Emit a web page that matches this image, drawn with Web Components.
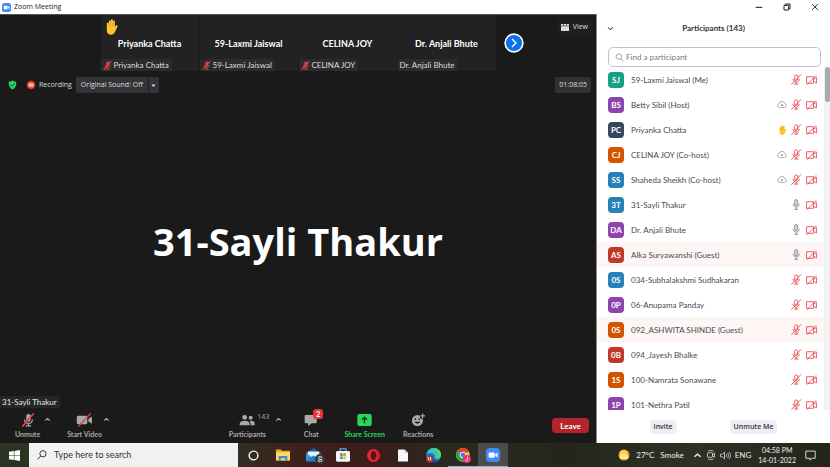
<!DOCTYPE html>
<html lang="en">
<head>
<meta charset="utf-8">
<title>Zoom Meeting</title>
<style>
  html, body { height: 100%; }
  body {
    margin: 0; display: flex; flex-direction: column; overflow: hidden;
    background: #fff; color: #333;
    font: 8px/12px Lato, "Open Sans", sans-serif;
    --small: 7px/12px "Open Sans", "Noto Sans", sans-serif;
  }
  main { flex: 1; min-height: 0; display: grid; grid-template-columns: 596fr 234fr; grid-template-rows: minmax(0, 1fr); }
</style>
</head>
<body>
<title-bar>Zoom Meeting</title-bar>
<main>
  <meeting-stage></meeting-stage>
  <participants-panel></participants-panel>
</main>
<task-bar></task-bar>

<script>
const ICONS = {
  zoom: ['0 0 16 16', '<rect width="16" height="16" rx="4.5" fill="#3f8cf4"/><rect x="3" y="5" width="7" height="6" rx="1.4" fill="#fff"/><path d="M10.6 7.2 13.2 5.2v5.6l-2.6-2z" fill="#fff"/>'],
  hand: ['1 0 14 18', '<path d="M2.700 11V5.200a1.100 1.100 0 0 1 2.200 0V2.500a1.200 1.200 0 0 1 2.300 0V1.500a1.200 1.200 0 0 1 2.400 0v1.300a1.100 1.100 0 0 1 2.200 0v6.300l.9-1.400c1-1.200 2.700-.3 2 1l-2.700 5.700c-1 2.300-2.300 3.300-4.700 3.300-3.200 0-4.600-2.200-4.600-4.700z" fill="#fcc42f"/><path d="M4.900 5v4M7.200 3v5.500M9.600 3v5.500" stroke="#dd9414" stroke-width=".7" fill="none"/>'],
  micoff: ['0 0 16 16', '<rect x="6" y="1" width="5" height="9" rx="2.500" fill="currentColor"/><path d="M4 7.500c0 6 9 6 9 0M8.500 12v2.700M5.500 14.700h6" stroke="currentColor" stroke-width="1.400" fill="none"/><path d="M14.500.5 1.500 15.500" stroke="#e0434b" stroke-width="2"/>'],
  micoffline: ['1 0 18 18', '<g fill="none" stroke="#e8424c" stroke-width="1.400"><rect x="7" y="1.500" width="5" height="9" rx="2.500"/><path d="M4.500 8c0 7 10 7 10 0M9.500 13.500v3M6 16.500h7M17.500.5 1.500 17.500"/></g>'],
  mic: ['1 0 18 18', '<g fill="none" stroke="#85858d" stroke-width="1.400"><rect x="7" y="1" width="5" height="10" rx="2.500" fill="#d5d5da"/><path d="M4.500 8c0 7 10 7 10 0M9.500 13.500v3.500M6.500 17h6"/></g>'],
  camoffline: ['0 0 20 18', '<g fill="none" stroke="#e8424c" stroke-width="1.500"><path d="M13.500 3H1v12h12.500zM13.500 8 19 4v10.500L13.500 11M18.500.5 2 17.500"/></g>'],
  camoff: ['0 0 24 20', '<rect x="1" y="4" width="15" height="12" rx="2" fill="#a9a9a9"/><path d="m17.500 8.500 5-3.500v10.500l-5-3.500z" fill="#a9a9a9"/><path d="M21 .5 3 19.500" stroke="#d8434b" stroke-width="2"/>'],
  cloud: ['0 1 20 14', '<path d="M5 14.200a4.200 4.200 0 0 1-.5-8.200 5.500 5.500 0 0 1 10.800 0A4.200 4.200 0 0 1 15 14.200z" fill="none" stroke="#8b8b96" stroke-width="1.400"/><circle cx="10" cy="9.200" r="1.800" fill="#e3444e"/>'],
  down: ['0 0 10 10', '<path d="m1.500 3.500 3.500 3 3.500-3" fill="none" stroke="currentColor" stroke-width="1.500"/>'],
  up: ['0 0 10 10', '<path d="m1.500 6.500 3.500-3 3.500 3" fill="none" stroke="currentColor" stroke-width="1.500"/>'],
  tri: ['0 0 10 10', '<path d="M2 3.500h6L5 7z" fill="currentColor"/>'],
  next: ['0 0 20 20', '<circle cx="10" cy="10" r="8.900" fill="#0e71eb" stroke="#fff" stroke-width="1.600"/><path d="m8 6 4 4-4 4" fill="none" stroke="#fff" stroke-width="1.400"/>'],
  grid: ['0 0 16 14', '<path d="M0 0h4.500v3.500H0zM5.700 0h4.600v3.500H5.700zM11.500 0H16v3.500h-4.500zM0 4.700h16V14H0z" fill="#ddd"/>'],
  shield: ['0 0 18 20', '<path d="M9 1c2.500 1.800 5 2.300 7.500 2.300C17 11 15 16 9 19 3 16 1 11 1.500 3.300 4 3.300 6.500 2.800 9 1z" fill="#25d35f"/><path d="m5 9.500 3 3 5.200-5.500" fill="none" stroke="#143" stroke-width="2"/>'],
  record: ['0 0 20 20', '<circle cx="10" cy="10" r="9.500" fill="#6e2317"/><circle cx="10" cy="10" r="7.500" fill="#ef4a3a"/><rect x="5.500" y="7" width="9" height="6" rx="1" fill="#ffd9d2"/><path d="M7 10h6" stroke="#e8685b" stroke-width="1.200"/>'],
  people: ['0 0 24 18', '<g fill="#a9a9a9"><circle cx="8.500" cy="5" r="3.600"/><path d="M1 17v-2.500c0-6 15-6 15 0V17z"/><circle cx="17.500" cy="5.500" r="3"/><path d="M17.500 17v-3c0-1.300-.6-2.600-1.600-3.500 4-.8 7.600.8 7.600 4V17z"/></g>'],
  chat: ['0 0 22 22', '<path d="M3 3h15a2 2 0 0 1 2 2v9a2 2 0 0 1-2 2h-6l-5.500 5V16H3a2 2 0 0 1-2-2V5a2 2 0 0 1 2-2z" fill="#a9a9a9"/>'],
  share: ['0 0 24 20', '<rect width="24" height="20" rx="3.500" fill="#23d959"/><path d="M12 15.500V6M8 9.500l4-4 4 4" fill="none" stroke="#17341f" stroke-width="2.200"/>'],
  smile: ['0 0 24 24', '<circle cx="11" cy="13" r="9.500" fill="#a9a9a9"/><circle cx="7.500" cy="10.500" r="1.400" fill="#1a1a1a"/><circle cx="14" cy="10.500" r="1.400" fill="#1a1a1a"/><path d="M6 15c1.700 4 8.300 4 10 0z" fill="#1a1a1a"/><circle cx="20" cy="5" r="5" fill="#1a1a1a"/><path d="M20 1v8M16 5h8" stroke="#a9a9a9" stroke-width="2"/>'],
  search: ['0 0 16 16', '<circle cx="7" cy="6.500" r="5" fill="none" stroke="currentColor" stroke-width="1.200"/><path d="m10.500 10.500 4.500 4.500" stroke="currentColor" stroke-width="1.200"/>'],
  wsearch: ['0 0 16 16', '<circle cx="9.500" cy="6" r="5" fill="none" stroke="#222" stroke-width="1.400"/><path d="M6 9.500 1 15" stroke="#222" stroke-width="1.400"/>'],
  min: ['0 0 12 12', '<path d="M1 6.500h10" stroke="#222" stroke-width="1.600"/>'],
  restore: ['0 0 12 12', '<path d="M1.500 3.500h7v7h-7zM3.500 3.500v-2h7v7h-2" fill="none" stroke="#222" stroke-width="1.500"/>'],
  close: ['0 0 12 12', '<path d="m1.500 1.500 9 9m0-9-9 9" stroke="#222" stroke-width="1.300"/>'],
  win: ['0 0 20 20', '<path d="M0 3 8.800 1.700v7.800H0zM9.800 1.600 20 0v9.500H9.800zM0 10.500h8.800v7.800L0 17zM9.800 10.500H20V20L9.800 18.400z" fill="#fff"/>'],
  cortana: ['0 0 20 20', '<circle cx="10" cy="10" r="8" fill="none" stroke="#f4f1ee" stroke-width="2.600"/>'],
  folder: ['0 0 26 22', '<path d="M0 1h9l2 2h15v18H0z" fill="#e8ab2d"/><path d="M0 6h26v15H0z" fill="#ffd867"/><path d="M5 21v-8h16v8h-4v-4H9v4z" fill="#3d8fd8"/>'],
  mail: ['0 0 26 24', '<path d="M0 9 13 0l13 9v14H0z" fill="#1266b0"/><path d="M3 6h20v12H3z" fill="#e9f3fb"/><path d="M0 9l13 8 13-8v14H0z" fill="#2d9be8"/><path d="M0 23l13-10 13 10z" fill="#1d7fd0"/>'],
  store: ['0 0 24 24', '<path d="M7 7V1.500h10V7" fill="none" stroke="#41b5ec" stroke-width="2.200"/><rect y="5" width="24" height="18.500" rx="2.500" fill="#f4f6f8"/><path d="M7 9h4.500v4.500H7z" fill="#ef5030"/><path d="M12.500 9H17v4.500h-4.500z" fill="#7cb82d"/><path d="M7 14.500h4.500V19H7z" fill="#1e9ee5"/><path d="M12.500 14.500H17V19h-4.500z" fill="#f8b716"/>'],
  opera: ['0 0 24 24', '<path fill-rule="evenodd" d="M12 0a12 12 0 1 0 0 24 12 12 0 0 0 0-24zm0 3.500c3 0 5 3.600 5 8.500s-2 8.500-5 8.500-5-3.600-5-8.500 2-8.500 5-8.500z" fill="#f0202c"/><path d="M17 3.500c2.500 4 2.500 13 0 17a11 11 0 0 0 0-17z" fill="#b10f1c"/>'],
  file: ['0 0 18 22', '<path d="M0 0h12l6 6v16H0z" fill="#f7f7f7"/><path d="M12 0v6h6z" fill="#bbb"/>'],
  edge: ['0 0 24 24', '<circle cx="12" cy="12" r="12" fill="#1679d0"/><path d="M1 9C3 3 7 0 12 0c7 0 12 5 12 11 0 4-3 6-7 6-3 0-4-1-3-3 1-5-6-8-13-5z" fill="#38c6b4"/><path d="M12 0c7 0 12 5 12 11 0 4-3 6-7 6 5-4 3-13-5-17z" fill="#5bd66a"/><path d="M8 13c0 6 5 9 13 6-5 7-15 6-18-1 0-4 2-6 5-5z" fill="#123f89"/><circle cx="6" cy="17.500" r="6" fill="#a92732"/><path d="m3 14 2 6m2-6 1 6" stroke="#fff" stroke-width="1.600"/>'],
  chrome: ['0 0 24 24', '<circle cx="11" cy="11" r="11" fill="#fbc91d"/><path d="M11 11 1.500 5.500a11 11 0 0 1 19 0z" fill="#e43d31"/><path d="M11 11 1.500 5.500A11 11 0 0 0 11 22l4-7z" fill="#2ba24c"/><circle cx="11" cy="11" r="5" fill="#fff"/><circle cx="11" cy="11" r="3.900" fill="#3c7de6"/><circle cx="17.500" cy="17.500" r="6.500" fill="#ec3577"/><path d="M18.500 14v4.500c0 2.500-3 2.500-3 .5" stroke="#fff" stroke-width="1.200" fill="none"/>'],
  weather: ['0 0 24 24', '<circle cx="12" cy="12" r="11" fill="#f6a81c"/><circle cx="11" cy="9" r="7" fill="#ffd04a"/><path d="M7 20a4 4 0 0 1 0-8c2-3 6-3 8 0 4-1 7 2 6 5-.5 2-2 3-4 3z" fill="#ffe6a6"/>'],
  meetnow: ['0 0 20 20', '<g fill="none" stroke="#eee" stroke-width="1.500"><rect x="3" y="5.500" width="10" height="9" rx="1.500"/><path d="m13 9 4-2.500v7.500L13 11.500M4 2.500c3-2 8-2 11 0M4 17.500c3 2 8 2 11 0"/></g>'],
  sound: ['0 0 22 18', '<g fill="none" stroke="#eee" stroke-width="1.400"><path d="M1 6.500h3.500L9 2.500v13l-4.500-4H1zM12 6c1.500 2 1.500 4 0 6M15 4c2.800 3 2.800 7 0 10M18 2c4 4 4 10 0 14"/></g>'],
  note: ['0 0 20 20', '<path d="M1.500 2h17v13H12l-3 3.500V15H1.500z" fill="none" stroke="#eee" stroke-width="1.600"/>']
};
const icon = (name, w, h = w) => `<svg-icon name="${name}" style="--w:${w}px;--h:${h}px"></svg-icon>`;

const BASE = `
  *, *::before { box-sizing: border-box; }
  button { font: inherit; color: inherit; background: none; border: 0; padding: 0; margin: 0; }
`;
class Base extends HTMLElement {
  connectedCallback() {
    if (this.shadowRoot) return;
    this.attachShadow({ mode: 'open' }).innerHTML = `<style>${BASE}${this.css()}</style>${this.html()}`;
  }
  css() { return ''; }
  html() { return '<slot></slot>'; }
  attr(n) { return this.getAttribute(n) || ''; }
}

customElements.define('svg-icon', class extends Base {
  css() { return ':host{display:block;flex:none;width:var(--w);height:var(--h)} svg{display:block;width:100%;height:100%}'; }
  html() { const [box, body] = ICONS[this.attr('name')]; return `<svg viewBox="${box}" aria-hidden="true">${body}</svg>`; }
});

customElements.define('title-bar', class extends Base {
  css() { return `
    :host { display: flex; align-items: center; gap: 3px; height: 14px; padding: 0 10px 0 2px; background: #fff; color: #222; font: var(--small); }
    .name { flex: 1; }
    .controls { display: flex; gap: 18px; }
    button { width: 10px; display: grid; place-items: center; }`; }
  html() { return `${icon('zoom', 9)}<span class="name"><slot></slot></span>
    <div class="controls">
      <button type="button" aria-label="Minimize">${icon('min', 8)}</button>
      <button type="button" aria-label="Restore">${icon('restore', 8)}</button>
      <button type="button" aria-label="Close">${icon('close', 8)}</button>
    </div>`; }
});

customElements.define('video-tile', class extends Base {
  css() { return `
    :host { display: grid; grid-template-rows: 20px 18px 1fr; width: 99px; height: 56px; background: #222; border-right: 1px solid #1c1c1c; color: #fff; }
    .hand { padding: 4px 0 0 4px; }
    .name { text-align: center; font-weight: 700; line-height: 18px; font-size: 9px; white-space: nowrap; }
    .tag { align-self: end; justify-self: start; display: flex; align-items: center; gap: 2px; height: 12px; padding: 0 3px 0 2px; background: #2b2b2b; color: #ddd; }`; }
  html() { return `<div class="hand">${this.hasAttribute('raised') ? icon('hand', 13, 16) : ''}</div>
    <div class="name">${this.attr('name')}</div>
    <div class="tag">${this.hasAttribute('muted') ? `<span style="color:#e0434b">${icon('micoff', 9)}</span>` : ''}${this.attr('name')}</div>`; }
});

customElements.define('tool-button', class extends Base {
  css() { return `
    :host { display: block; color: #a9a9a9; }
    :host([accent]) { color: #23d959; }
    button { display: grid; justify-items: center; grid-template-rows: 16px 12px; align-items: center; white-space: nowrap; font-weight: 700; font-size: 7px; }
    .art { position: relative; display: flex; }
    .count { position: absolute; left: 100%; top: -3px; padding-left: 2px; font: var(--small); }
    .badge { position: absolute; left: 9px; top: -4px; min-width: 10px; height: 10px; border-radius: 3px; background: #e8343a; color: #fff; line-height: 10px; text-align: center; }`; }
  html() { const [w, h] = this.attr('size').split(' ');
    return `<button type="button"><span class="art">${icon(this.attr('icon'), w, h)}
      ${this.hasAttribute('count') ? `<span class="count">${this.attr('count')}</span>` : ''}
      ${this.hasAttribute('badge') ? `<span class="badge">${this.attr('badge')}</span>` : ''}</span><slot></slot></button>`; }
});

customElements.define('meeting-stage', class extends Base {
  css() { return `
    :host { display: flex; flex-direction: column; background: #1a1a1a; color: #ddd; border-top: 1px solid #555; min-width: 0; }
    .strip { display: grid; grid-template-columns: 1fr auto 1fr; }
    .tiles { grid-column: 2; display: flex; border-left: 1px solid #1c1c1c; }
    .side { display: flex; justify-content: space-between; align-items: center; padding: 0 4px 0 7px; }
    .view { align-self: flex-start; display: flex; align-items: center; gap: 4px; height: 16px; margin-top: 4px; padding: 0 4px; background: #1f1f1f; border-radius: 3px; font: var(--small); }
    .status { display: flex; align-items: center; height: 16px; margin-top: 6px; padding: 0 5px 0 8px; font: var(--small); }
    .rec { display: flex; align-items: center; gap: 3px; margin: 0 4px 0 9px; }
    .sound { display: flex; height: 16px; background: #333437; border-radius: 2px; }
    .sound button + button { width: 11px; border-left: 1px solid #1f1f1f; display: grid; place-items: center; }
    .sound button:first-child { padding: 0 5px; }
    .timer { margin-left: auto; background: #303134; padding: 0 4px; line-height: 16px; border-radius: 2px; }
    .speaker { flex: 1; display: grid; place-items: center; color: #fff; font: 700 38px/48px "Open Sans", "Noto Sans", sans-serif; padding-bottom: 8px; }
    .tag { align-self: flex-start; background: #262626; color: #e6e6e6; line-height: 12px; padding: 0 3px 0 2px; }
    .tools { display: flex; justify-content: space-between; align-items: center; height: 35px; padding: 0 7px 0 15px; }
    .group { display: flex; align-items: flex-start; }
    .caret { width: 8px; height: 16px; display: grid; place-items: center; color: #a9a9a9; }
    .leave { width: 37px; height: 15px; border-radius: 4px; background: #b5242a; color: #fff; font-weight: 700; }`; }
  html() { return `
    <div class="strip">
      <div class="tiles">
        <video-tile name="Priyanka Chatta" muted raised></video-tile>
        <video-tile name="59-Laxmi Jaiswal" muted></video-tile>
        <video-tile name="CELINA JOY" muted></video-tile>
        <video-tile name="Dr. Anjali Bhute"></video-tile>
      </div>
      <div class="side">
        <button type="button" aria-label="Next">${icon('next', 20)}</button>
        <button type="button" class="view">${icon('grid', 8, 7)}View</button>
      </div>
    </div>
    <div class="status">
      ${icon('shield', 9, 10)}
      <span class="rec">${icon('record', 10)}Recording</span>
      <div class="sound"><button type="button">Original Sound: Off</button><button type="button" aria-label="Sound options">${icon('tri', 7)}</button></div>
      <span class="timer">01:08:05</span>
    </div>
    <div class="speaker">31-Sayli Thakur</div>
    <div class="tag">31-Sayli Thakur</div>
    <div class="tools">
      <div class="group">
        <tool-button icon="micoff" size="14 14" style="margin-right:3px">Unmute</tool-button><button type="button" class="caret" aria-label="Audio options">${icon('up', 7)}</button>
        <tool-button icon="camoff" size="17 14" style="margin-left:16px">Start Video</tool-button><button type="button" class="caret" aria-label="Video options">${icon('up', 7)}</button>
      </div>
      <div class="group">
        <tool-button icon="people" size="16 12" count="143" style="margin-right:9px">Participants</tool-button><button type="button" class="caret" aria-label="Participant options">${icon('up', 7)}</button>
        <tool-button icon="chat" size="14 14" badge="2" style="margin:0 26px 0 21px">Chat</tool-button>
        <tool-button icon="share" size="15 12" accent style="margin-right:18px">Share Screen</tool-button>
        <tool-button icon="smile" size="14 14">Reactions</tool-button>
      </div>
      <button type="button" class="leave">Leave</button>
    </div>`; }
});

customElements.define('participant-row', class extends Base {
  css() { return `
    :host { display: flex; align-items: center; height: 25px; flex: none; padding: 0 7px 0 11px; gap: 7px; color: #4a4a55; }
    :host([guest]) { background: #fdf6f4; }
    .avatar { width: 16px; height: 16px; border-radius: 4px; color: #fff; font-weight: 700; line-height: 16px; text-align: center; background: var(--c); }
    .name { flex: 1; white-space: nowrap; }
    .state { display: flex; align-items: center; gap: 4px; }`; }
  html() {
    const s = this.attr('state');
    return `<span class="avatar">${this.attr('initials')}</span><span class="name"><slot></slot></span>
    <span class="state">${s.includes('c') ? icon('cloud', 10, 7) : ''}${s.includes('h') ? icon('hand', 9, 10) : ''}
    ${icon(s.includes('u') ? 'mic' : 'micoffline', 11, 11)}${icon('camoffline', 11, 10)}</span>`; }
});

const PEOPLE = [
  ['SJ', '#16a085', '59-Laxmi Jaiswal (Me)', 'm'], ['BS', '#8e44ad', 'Betty Sibil (Host)', 'cm'],
  ['PC', '#34495e', 'Priyanka Chatta', 'hm'], ['CJ', '#d35400', 'CELINA JOY (Co-host)', 'cm'],
  ['SS', '#2980b9', 'Shaheda Sheikh (Co-host)', 'cm'], ['3T', '#2980b9', '31-Sayli Thakur', 'u'],
  ['DA', '#8e44ad', 'Dr. Anjali Bhute', 'u'], ['AS', '#c0392b', 'Alka Suryawanshi (Guest)', 'u'],
  ['0S', '#2980b9', '034-Subhalakshmi Sudhakaran', 'm'], ['0P', '#8e44ad', '06-Anupama Panday', 'm'],
  ['0S', '#d35400', '092_ASHWITA SHINDE (Guest)', 'm'], ['0B', '#c0392b', '094_Jayesh Bhalke', 'm'],
  ['1S', '#d35400', '100-Namrata Sonawane', 'm'], ['1P', '#8e44ad', '101-Nethra Patil', 'm']
];
customElements.define('participants-panel', class extends Base {
  css() { return `
    :host { display: flex; flex-direction: column; min-width: 0; background: #fff; border-left: 1px solid #8c8c8c; }
    header { display: grid; grid-template-columns: 20px 1fr 20px; align-items: center; height: 28px; padding: 0 10px; }
    h2 { margin: 0; font-size: 8px; font-weight: 700; text-align: center; color: #333; }
    header button { color: #555; }
    .find { display: flex; align-items: center; gap: 2px; height: 20px; margin: 5px 9px 0 11px; padding: 0 6px; border: 1px solid #c3c0d8; border-radius: 5px; color: #77778a; }
    input { flex: 1; min-width: 0; border: 0; padding: 0; outline: 0; background: none; font: inherit; color: inherit; }
    input::placeholder { color: #77778a; opacity: 1; }
    .body { flex: 1; min-height: 0; display: flex; }
    .list { flex: 1; min-width: 0; overflow: hidden; display: flex; flex-direction: column; }
    .bar { width: 6px; background: #f1f1f6; }
    .bar i { display: block; height: 35px; width: 5px; margin-left: 1px; border-radius: 3px; background: #a9a9b2; }
    footer { display: flex; justify-content: space-around; align-items: center; height: 33px; padding: 0 26px; }
    footer button { height: 14px; padding: 0 4px; border-radius: 4px; background: #f0eff6; color: #333344; font: var(--small); font-weight: 600; }`; }
  html() { return `
    <header><button type="button" aria-label="Collapse">${icon('down', 7)}</button><h2>Participants (143)</h2></header>
    <label class="find">${icon('search', 9)}<input type="text" aria-label="Find a participant" placeholder="Find a participant"></label>
    <div class="body"><div class="list" role="list">${PEOPLE.map(([i, c, n, s]) =>
      `<participant-row role="listitem" initials="${i}" style="--c:${c}" state="${s}" ${n.includes('Guest') ? 'guest' : ''}>${n}</participant-row>`).join('')}</div>
      <div class="bar"><i></i></div></div>
    <footer><button type="button">Invite</button><button type="button">Unmute Me</button></footer>`; }
});

customElements.define('task-bar', class extends Base {
  css() { return `
    :host { display: flex; height: 24px; color: #eee; background: linear-gradient(90deg, #2d3324 0, #2d3324 28%, #37291f 31%, #3f1f1b 38%, #3a1d1a 46%, #2b2a20 54%, #24261c 68%, #2f3126 84%, #23251b 100%); }
    button { display: grid; place-items: center; width: 30px; position: relative; }
    .start { width: 29px; }
    .find { flex: 0 1 209px; display: flex; align-items: center; gap: 7px; padding-left: 8px; background: #f1f1f1; }
    input { flex: 1; min-width: 0; border: 0; padding: 0; outline: 0; background: none; font: inherit; font-size: 9px; }
    input::placeholder { color: #333; opacity: 1; }
    .open { box-shadow: inset 0 -1px #76b9ed; }
    .active { background: #4c4c4a; }
    .badge { position: absolute; left: 17px; top: 11px; width: 10px; height: 10px; border-radius: 50%; background: #35393c; color: #fff; line-height: 10px; }
    .tray { margin-left: auto; display: flex; align-items: center; padding-right: 14px; white-space: nowrap; }
    .tray button { width: auto; }
    .weather { display: flex; align-items: center; gap: 6px; margin-right: 9px; }
    .icons { display: flex; align-items: center; gap: 4px; margin-right: 7px; }
    .clock { font-size: 7px; line-height: 10px; text-align: center; margin-right: 9px; }`; }
  html() { return `
    <button type="button" class="start" aria-label="Start">${icon('win', 11)}</button>
    <label class="find">${icon('wsearch', 10)}<input type="text" aria-label="Search" placeholder="Type here to search"></label>
    <button type="button" aria-label="Cortana">${icon('cortana', 11)}</button>
    <button type="button" aria-label="File Explorer">${icon('folder', 14, 12)}</button>
    <button type="button" aria-label="Mail">${icon('mail', 15, 14)}<span class="badge">8</span></button>
    <button type="button" aria-label="Store">${icon('store', 14)}</button>
    <button type="button" aria-label="Opera">${icon('opera', 13)}</button>
    <button type="button" aria-label="Document">${icon('file', 10, 13)}</button>
    <button type="button" aria-label="Edge">${icon('edge', 15)}</button>
    <button type="button" class="open" aria-label="Chrome">${icon('chrome', 15)}</button>
    <button type="button" class="open active" aria-label="Zoom">${icon('zoom', 14)}</button>
    <div class="tray">
      <button type="button" class="weather">${icon('weather', 12)}<span>27°C</span><span>Smoke</span></button>
      <div class="icons">${icon('up', 9)}${icon('meetnow', 10)}${icon('sound', 11, 9)}<span>ENG</span></div>
      <div class="clock">04:58 PM<br>14-01-2022</div>
      <button type="button" aria-label="Notifications">${icon('note', 11)}</button>
    </div>`; }
});
</script>
</body>
</html>
